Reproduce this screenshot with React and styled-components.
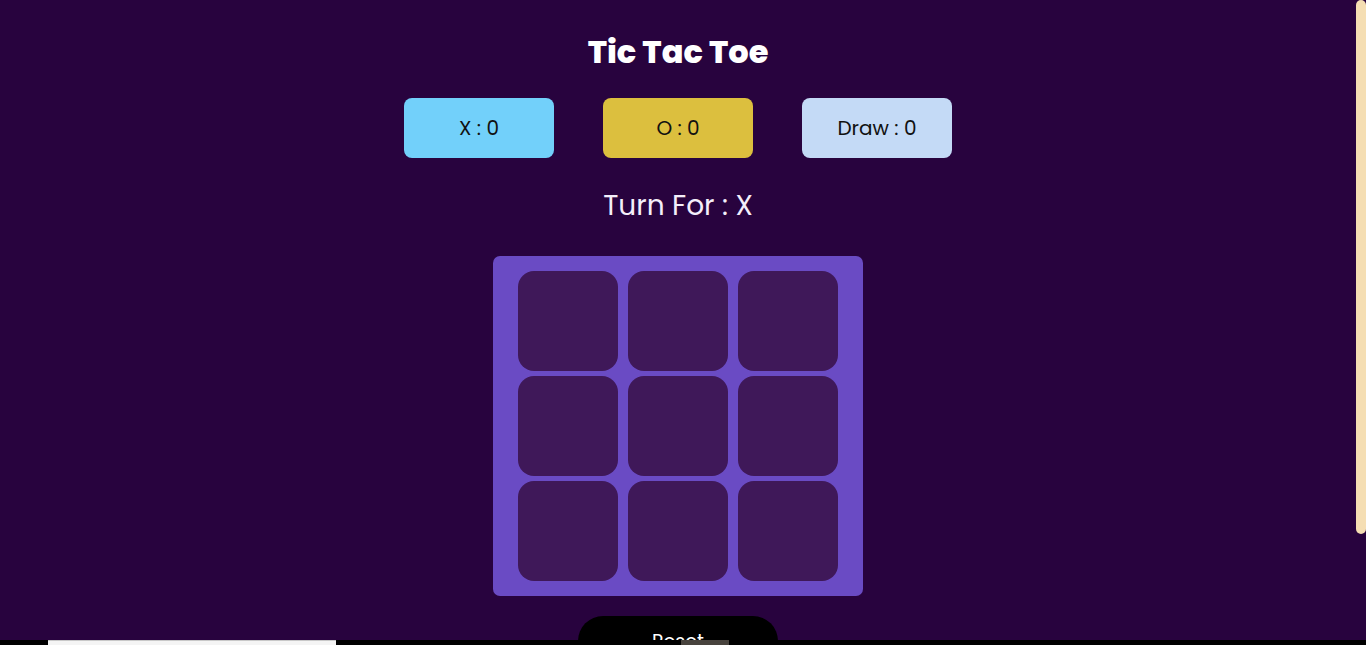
import React, { useState } from 'react';
import styled, { createGlobalStyle } from 'styled-components';

const GlobalStyle = createGlobalStyle`
    html, body {
        margin: 0;
        padding: 0;
        background: #28033e;
        font-family: Poppins, Inter, "Noto Sans", sans-serif;
    }
`

const Page = styled.div`
    display: flex;
    flex-direction: column;
    align-items: center;
    margin-right: 10px;
    padding: 32px 0 104px;
`

const Title = styled.h1`
    margin: 0;
    font-size: 32px;
    line-height: 40px;
    font-weight: 800;
    color: #ffffff;
`

const ScoreRow = styled.div`
    display: flex;
    gap: 49px;
    margin-top: 26px;
`

const ScoreBox = styled.div`
    width: 150px;
    height: 60px;
    border-radius: 8px;
    background: ${p => p.color};
    display: flex;
    align-items: center;
    justify-content: center;
    font-size: 20px;
    color: #111111;
`

const Turn = styled.div`
    margin-top: 28px;
    font-size: 28px;
    line-height: 40px;
    color: #f4eefa;
`

const Board = styled.div`
    margin-top: 30px;
    width: 370px;
    box-sizing: border-box;
    padding: 15px 25px;
    background: #6a4bc4;
    border-radius: 7px;
    display: grid;
    grid-template-columns: repeat(3, 100px);
    grid-auto-rows: 100px;
    column-gap: 10px;
    row-gap: 5px;
`

const Cell = styled.button`
    border: none;
    padding: 0;
    border-radius: 16px;
    background: #3f1859;
    color: #ffffff;
    font-family: inherit;
    font-size: 48px;
    cursor: pointer;
`

const ResetButton = styled.button`
    margin-top: 20px;
    width: 200px;
    height: 50px;
    border: none;
    border-radius: 25px;
    background: #000000;
    color: #ffffff;
    font-family: inherit;
    font-size: 19px;
    cursor: pointer;
`

// fake scrollbar, the headless browser draws none
const ScrollThumb = styled.div`
    position: fixed;
    top: 0;
    right: 0;
    width: 10px;
    height: 534px;
    border-radius: 5px;
    background: #f5deb3;
    z-index: 5;
`

const Taskbar = styled.div`
    position: fixed;
    left: 0;
    right: 0;
    bottom: 0;
    height: 5px;
    background: #000000;
    z-index: 10;
`

const TaskItem = styled.div`
    position: absolute;
    top: 0;
    bottom: 0;
    left: ${p => p.left}px;
    width: ${p => p.width}px;
    background: ${p => p.color};
    box-sizing: border-box;
    border-top: 1px solid ${p => p.edge};
`

export default function App() {
    const [cells, setCells] = useState(Array(9).fill(''));
    const [turn, setTurn] = useState('X');

    const play = (i) => {
        if (cells[i]) return;
        const next = cells.slice();
        next[i] = turn;
        setCells(next);
        setTurn(turn === 'X' ? 'O' : 'X');
    };

    return <>
        <GlobalStyle />
        <Page>
            <Title>Tic Tac Toe</Title>
            <ScoreRow>
                <ScoreBox color="#72d0fa">X : 0</ScoreBox>
                <ScoreBox color="#dcbf3e">O : 0</ScoreBox>
                <ScoreBox color="#c4daf6">Draw : 0</ScoreBox>
            </ScoreRow>
            <Turn>Turn For : {turn}</Turn>
            <Board>
                {cells.map((c, i) => <Cell key={i} onClick={() => play(i)}>{c}</Cell>)}
            </Board>
            <ResetButton onClick={() => { setCells(Array(9).fill('')); setTurn('X'); }}>Reset</ResetButton>
        </Page>
        <ScrollThumb />
        <Taskbar>
            <TaskItem left={48} width={288} color="#f4f4f4" edge="#c8c8c8" />
            <TaskItem left={681} width={48} color="#48433d" edge="#48433d" />
        </Taskbar>
    </>;
}
